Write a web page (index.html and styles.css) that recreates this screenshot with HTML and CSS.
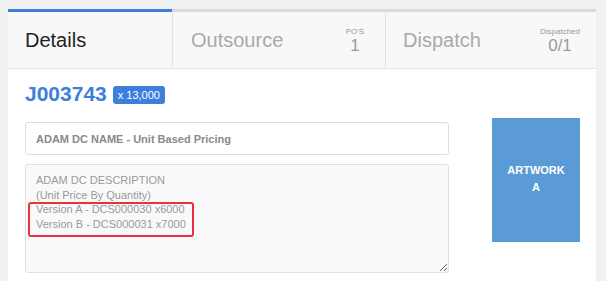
FILE: index.html
```html
<!DOCTYPE html>
<html lang="en">
<head>
  <meta charset="UTF-8" />
  <meta name="viewport" content="width=device-width, initial-scale=1.0" />
  <title>Job J003743</title>
  <link rel="stylesheet" href="styles.css">
</head>
<body>
  <div class="panel">
    <div class="tabs">
      <div class="tab tab-details active">
        <span class="tab-label">Details</span>
      </div>
      <div class="tab tab-outsource">
        <span class="tab-label">Outsource</span>
        <div class="stat">
          <span class="stat-label">PO'S</span>
          <span class="stat-value">1</span>
        </div>
      </div>
      <div class="tab tab-dispatch">
        <span class="tab-label">Dispatch</span>
        <div class="stat">
          <span class="stat-label">Dispatched</span>
          <span class="stat-value">0/1</span>
        </div>
      </div>
    </div>

    <div class="content">
      <div class="job-head">
        <h1 class="job-no">J003743</h1>
        <span class="qty-badge">x 13,000</span>
      </div>

      <div class="job-row">
        <div class="job-fields">
          <input class="field-name" type="text" value="ADAM DC NAME - Unit Based Pricing" readonly>
          <div class="desc-wrap">
            <textarea class="field-desc" readonly>ADAM DC DESCRIPTION
(Unit Price By Quantity)
Version A - DCS000030 x6000
Version B - DCS000031 x7000</textarea>
            <div class="highlight"></div>
          </div>
        </div>
        <div class="artwork">ARTWORK<br>A</div>
      </div>
    </div>
  </div>
</body>
</html>
```

FILE: styles.css
```css
:root {
  --blue: #3d7fdb;
  --artwork: #5b9bd5;
  --tab-bg: #f8f8f8;
  --line: #e3e3e3;
  --font-main: 'Liberation Sans', Arial, sans-serif;
}

* {
  margin: 0;
  padding: 0;
  box-sizing: border-box;
}

body {
  font-family: var(--font-main);
  background: #f1f1f1;
  height: 281px;
  overflow: hidden;
}

.panel {
  width: 588px;
  margin: 9px 0 0 8px;
  background: #fff;
  height: 272px;
}

.tabs {
  display: flex;
  height: 60px;
  border-bottom: 1px solid var(--line);
}

.tab {
  display: flex;
  align-items: center;
  justify-content: space-between;
  background: var(--tab-bg);
  border-top: 3px solid #dadada;
  padding-left: 17px;
}

.tab + .tab {
  border-left: 1px solid var(--line);
}

.tab.active {
  border-top-color: var(--blue);
}

.tab-details {
  width: 164px;
}

.tab-outsource {
  width: 213px;
  padding-left: 18px;
  padding-right: 8px;
}

.tab-dispatch {
  width: 211px;
  padding-right: 14px;
}

.tab-label {
  font-size: 20px;
  color: #a9a9a9;
  margin-top: 1px;
}

.tab.active .tab-label {
  color: #222;
}

.stat {
  width: 44px;
  display: flex;
  flex-direction: column;
  align-items: center;
  color: #9a9a9a;
  margin-top: 1px;
}

.stat-label {
  font-size: 8px;
  line-height: 10px;
}

.stat-value {
  font-size: 17px;
  line-height: 18px;
}

.content {
  padding: 12px 16px 0 17px;
}

.job-head {
  display: flex;
  align-items: center;
  gap: 6px;
}

.job-no {
  font-size: 21px;
  font-weight: bold;
  color: var(--blue);
  line-height: 26px;
}

.qty-badge {
  background: var(--blue);
  color: #fff;
  font-size: 11px;
  padding: 2px 5px;
  border-radius: 3px;
  line-height: 14px;
  margin-top: 1px;
}

.job-row {
  display: flex;
  justify-content: space-between;
  align-items: flex-start;
  margin-top: 11px;
}

.job-fields {
  width: 424px;
  padding-top: 4px;
}

.field-name {
  display: block;
  width: 100%;
  height: 33px;
  border: 1px solid #dcdcdc;
  border-radius: 3px;
  padding: 0 10px;
  font-family: var(--font-main);
  font-size: 11px;
  font-weight: bold;
  color: #8a8a8a;
  background: #fff;
  outline: none;
}

.desc-wrap {
  position: relative;
  margin-top: 9px;
}

.field-desc {
  display: block;
  width: 100%;
  height: 109px;
  border: 1px solid #e0e0e0;
  border-radius: 3px;
  background: #f9f9f9;
  padding: 8px 10px;
  font-family: var(--font-main);
  font-size: 11px;
  line-height: 14.5px;
  color: #9a9a9a;
  resize: both;
  outline: none;
}

.highlight {
  position: absolute;
  left: 3px;
  top: 38px;
  width: 166px;
  height: 35px;
  border: 2.5px solid #e8323c;
  border-radius: 3px;
}

.artwork {
  width: 88px;
  height: 124px;
  background: var(--artwork);
  color: #fff;
  font-size: 11px;
  font-weight: bold;
  text-align: center;
  line-height: 17px;
  padding-top: 44px;
}
```
